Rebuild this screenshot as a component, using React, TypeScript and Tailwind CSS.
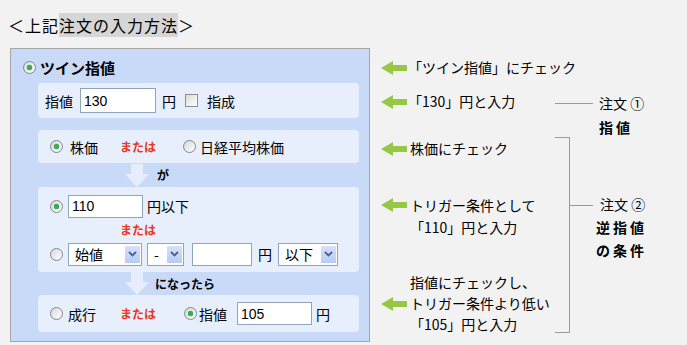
import React from 'react'

const jp = "font-['Noto_Sans_CJK_JP',sans-serif]"

function Radio({ on }: { on?: boolean }) {
  return (
    <span className="w-[13px] h-[13px] shrink-0 rounded-full border border-[#7a8899] bg-gradient-to-br from-[#d8d8d8] to-white flex items-center justify-center">
      {on && <span className="w-[5px] h-[5px] rounded-full bg-[#33b24a] shadow-[0_0_1px_#1d8a33]" />}
    </span>
  )
}

function TextBox({ value, w, h = 'h-[23px]', ml }: { value?: string; w: string; h?: string; ml: string }) {
  return (
    <div
      className={`${w} ${h} ${ml} shrink-0 border border-[#8fa4bd] bg-white flex items-center px-[3px] text-[14px] font-['Liberation_Sans',sans-serif] text-black`}
    >
      {value}
    </div>
  )
}

function Select({ label, w, ml }: { label: string; w: string; ml: string }) {
  return (
    <div className={`${w} ${ml} h-[23px] shrink-0 border border-[#8fa4bd] bg-white flex items-center justify-between pl-[6px] pr-[1px]`}>
      <span className="text-[14px] leading-none">{label}</span>
      <span className="w-[15px] h-[17px] bg-gradient-to-b from-[#d6e1fb] to-[#b7cbf4] flex items-center justify-center">
        <svg width="9" height="6" viewBox="0 0 9 6">
          <path d="M1 1 L4.5 4.5 L8 1" fill="none" stroke="#4a5f8c" strokeWidth="1.8" />
        </svg>
      </span>
    </div>
  )
}

function Or({ ml }: { ml: string }) {
  return <span className={`${ml} text-[12px] font-bold text-[#e8381f] leading-none`}>または</span>
}

function DownArrow() {
  return (
    <svg width="24" height="23" viewBox="0 0 24 23" className="shrink-0">
      <path d="M6 0 H18 V10 H24 L12 23 L0 10 H6 Z" fill="#e6edfc" />
    </svg>
  )
}

function GreenArrow() {
  return (
    <svg width="26" height="14" viewBox="0 0 26 14" className="shrink-0">
      <path d="M0 7 L12 0 V4 H26 V10 H12 V14 Z" fill="#96c745" />
    </svg>
  )
}

export default function App() {
  return (
    <div className={`w-[687px] h-[345px] bg-[#f2f2f2] overflow-hidden text-black ${jp}`}>
      <div className="pt-[15px] pl-[8px] text-[16px] leading-[20px] tracking-[1px]">
        ＜上記<span className="bg-[#d6d6d6]">注文の入力方法</span>＞
      </div>

      <div className="mt-[13px] flex">
        {/* form panel */}
        <div className="ml-[10px] w-[360px] h-[294px] shrink-0 border border-[#a6a6a6] bg-[#c9daf8] flex flex-col">
          <div className="h-[34px] pt-[2px] pl-[12px] flex items-center">
            <Radio on />
            <span className="ml-[4px] text-[15px] font-bold leading-none">ツイン指値</span>
          </div>

          <div className="ml-[27px] w-[321px] h-[35px] rounded-[4px] bg-[#e7eefc] flex items-center pl-[7px] text-[14px] leading-none">
            <span>指値</span>
            <TextBox value="130" w="w-[76px]" h="h-[25px]" ml="ml-[7px]" />
            <span className="ml-[6px]">円</span>
            <span className="ml-[9px] w-[13px] h-[13px] border border-[#8a8f96] bg-gradient-to-br from-[#dcdcd6] to-white" />
            <span className="ml-[9px]">指成</span>
          </div>

          <div className="mt-[12px] ml-[27px] w-[321px] h-[33px] rounded-[4px] bg-[#e7eefc] flex items-center pl-[12px] text-[14px] leading-none">
            <Radio on />
            <span className="ml-[7px]">株価</span>
            <Or ml="ml-[22px]" />
            <span className="ml-[27px]"><Radio /></span>
            <span className="ml-[4px]">日経平均株価</span>
          </div>

          <div className="h-[24px] pl-[114px] flex items-center">
            <DownArrow />
            <span className="ml-[8px] text-[12px] font-bold leading-none">が</span>
          </div>

          <div className="ml-[27px] w-[321px] h-[85px] rounded-[4px] bg-[#e7eefc] pt-[7px] text-[14px] leading-none flex flex-col">
            <div className="h-[24px] pl-[12px] flex items-center">
              <Radio on />
              <TextBox value="110" w="w-[75px]" ml="ml-[5px]" />
              <span className="ml-[4px]">円以下</span>
            </div>
            <div className="h-[24px] pl-[82px] flex items-center">
              <Or ml="ml-0" />
            </div>
            <div className="h-[24px] pl-[12px] flex items-center">
              <Radio />
              <Select label="始値" w="w-[74px]" ml="ml-[5px]" />
              <Select label="-" w="w-[37px]" ml="ml-[5px]" />
              <TextBox w="w-[60px]" ml="ml-[8px]" />
              <span className="ml-[6px]">円</span>
              <Select label="以下" w="w-[60px]" ml="ml-[6px]" />
            </div>
          </div>

          <div className="h-[23px] pl-[114px] flex items-center">
            <DownArrow />
            <span className="ml-[6px] text-[12px] font-bold leading-none">になったら</span>
          </div>

          <div className="ml-[27px] w-[321px] h-[37px] rounded-[4px] bg-[#e7eefc] flex items-center pl-[12px] text-[14px] leading-none">
            <Radio />
            <span className="ml-[5px]">成行</span>
            <Or ml="ml-[24px]" />
            <span className="ml-[28px]"><Radio on /></span>
            <span className="ml-[2px]">指値</span>
            <TextBox value="105" w="w-[75px]" ml="ml-[10px]" />
            <span className="ml-[4px]">円</span>
          </div>
        </div>

        {/* annotations */}
        <div className="ml-[11px] w-[174px] shrink-0 flex flex-col text-[14px] whitespace-nowrap">
          <div className="mt-[9px] h-[21px] flex items-center gap-[1px]">
            <GreenArrow />
            <span className="leading-[21px]">「ツイン指値」にチェック</span>
          </div>
          <div className="mt-[13px] h-[21px] flex items-center gap-[1px]">
            <GreenArrow />
            <span className="leading-[21px]">「130」円と入力</span>
          </div>
          <div className="mt-[26px] h-[21px] flex items-center gap-[1px]">
            <GreenArrow />
            <span className="leading-[21px] pl-[2px]">株価にチェック</span>
          </div>
          <div className="mt-[35px] flex items-start gap-[1px]">
            <div className="h-[22px] flex items-center"><GreenArrow /></div>
            <div className="leading-[22px] pl-[2px]">
              トリガー条件として
              <br />
              「110」円と入力
            </div>
          </div>
          <div className="mt-[34px] flex items-center gap-[1px]">
            <GreenArrow />
            <div className="leading-[21px] pl-[2px]">
              指値にチェックし、
              <br />
              トリガー条件より低い
              <br />
              「105」円と入力
            </div>
          </div>
        </div>

        {/* connectors */}
        <div className="w-[38px] shrink-0 flex flex-col">
          <div className="mt-[55px] h-px bg-[#9a9a9a]" />
          <div className="mt-[33px] flex">
            <div className="w-[15px] h-[196px] border-t border-r border-b border-[#9a9a9a]" />
            <div className="w-[23px] mt-[68px] h-px bg-[#9a9a9a]" />
          </div>
        </div>

        {/* order labels */}
        <div className="ml-[3px] flex flex-col text-[14px] whitespace-nowrap">
          <div className="mt-[43px] leading-[24px] pl-[3px]">注文 ①</div>
          <div className="leading-[24px] pl-[3px] font-bold tracking-[3px]">指値</div>
          <div className="mt-[54px] leading-[23px] pl-[4px]">注文 ②</div>
          <div className="leading-[23px] font-bold tracking-[3px]">逆指値</div>
          <div className="leading-[23px] font-bold tracking-[3px]">の条件</div>
        </div>
      </div>
    </div>
  )
}
